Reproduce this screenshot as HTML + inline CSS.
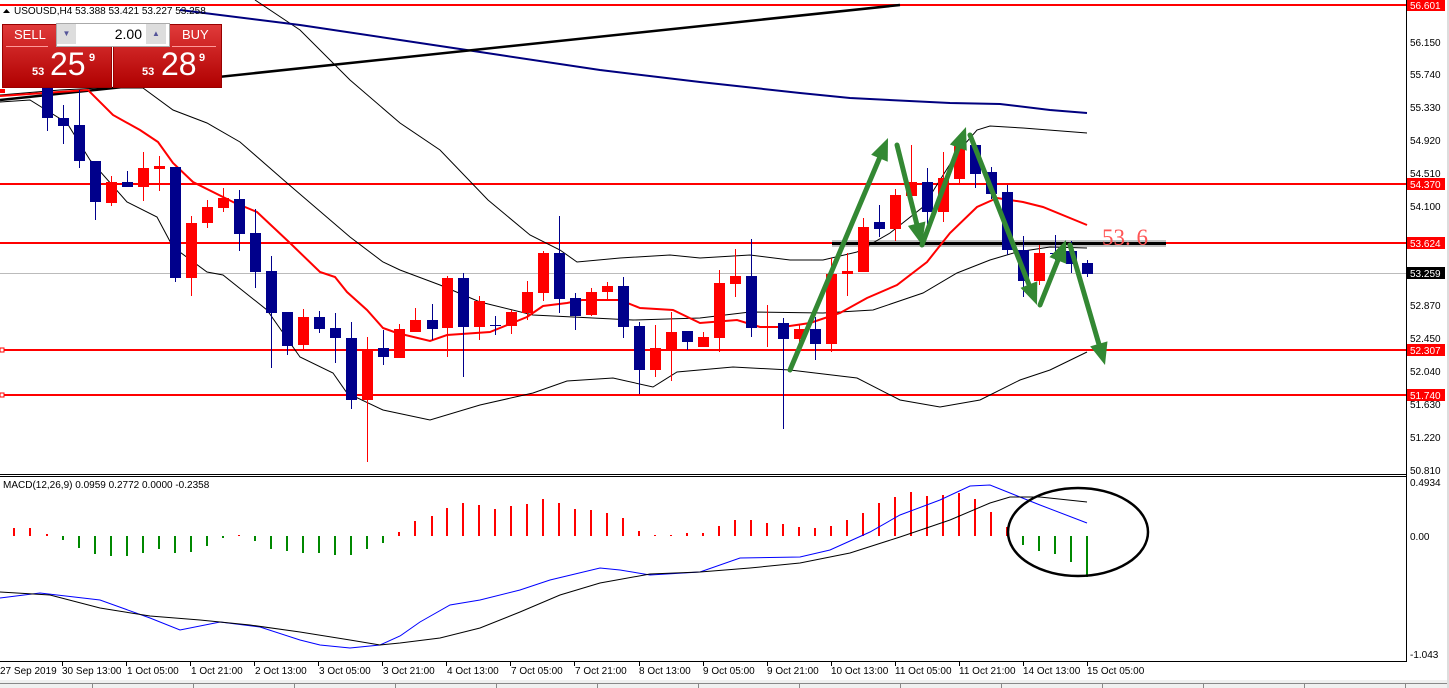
<!DOCTYPE html>
<html><head><meta charset="utf-8"><style>
body{margin:0;width:1449px;height:688px;overflow:hidden;background:#fff;font-family:"Liberation Sans",sans-serif}
svg{position:absolute;left:0;top:0}
.tp{position:absolute;color:#fff;font-family:"Liberation Sans",sans-serif}
</style></head><body>
<svg id="s" width="1449" height="688" xmlns="http://www.w3.org/2000/svg" font-family="Liberation Sans, sans-serif" font-size="10">
<rect width="1449" height="688" fill="#fff"/>
<g id="g"></g>
<g fill="#000">
<text x="1410" y="46">56.150</text><text x="1410" y="78">55.740</text><text x="1410" y="111">55.330</text>
<text x="1410" y="144">54.920</text><text x="1410" y="177">54.510</text><text x="1410" y="210">54.100</text>
<text x="1410" y="309">52.870</text><text x="1410" y="342">52.450</text><text x="1410" y="375">52.040</text>
<text x="1410" y="408">51.630</text><text x="1410" y="441">51.220</text><text x="1410" y="474">50.810</text>
<text x="1410" y="486">0.4934</text><text x="1410" y="540">0.00</text><text x="1410" y="658">-1.043</text>
<text x="14" y="14">USOUSD,H4  53.388 53.421 53.227 53.258</text>
<text x="3" y="488">MACD(12,26,9) 0.0959 0.2772 0.0000 -0.2358</text>
</g>
<path d="M3 13 L10 13 L6.5 9Z" fill="#000"/>
<g fill="#f00"><rect x="1407" y="-1" width="38" height="12"/><rect x="1407" y="178" width="38" height="12"/><rect x="1407" y="237" width="38" height="12"/><rect x="1407" y="344" width="38" height="12"/><rect x="1407" y="389" width="38" height="12"/></g>
<rect x="1407" y="267" width="38" height="12" fill="#000"/>
<g fill="#fff"><text x="1410" y="9">56.601</text><text x="1410" y="188">54.370</text><text x="1410" y="247">53.624</text><text x="1410" y="354">52.307</text><text x="1410" y="399">51.740</text><text x="1410" y="277">53.259</text></g>
<text x="1102" y="245" font-family="Liberation Serif, serif" font-size="23" fill="#f55">53. 6</text>
<g fill="#000" font-size="10">
<text x="0" y="674">27 Sep 2019</text><text x="62" y="674">30 Sep 13:00</text><text x="127" y="674">1 Oct 05:00</text><text x="191" y="674">1 Oct 21:00</text><text x="255" y="674">2 Oct 13:00</text><text x="319" y="674">3 Oct 05:00</text><text x="383" y="674">3 Oct 21:00</text><text x="447" y="674">4 Oct 13:00</text><text x="511" y="674">7 Oct 05:00</text><text x="575" y="674">7 Oct 21:00</text><text x="639" y="674">8 Oct 13:00</text><text x="703" y="674">9 Oct 05:00</text><text x="767" y="674">9 Oct 21:00</text><text x="831" y="674">10 Oct 13:00</text><text x="895" y="674">11 Oct 05:00</text><text x="959" y="674">11 Oct 21:00</text><text x="1023" y="674">14 Oct 13:00</text><text x="1087" y="674">15 Oct 05:00</text>
</g>
</svg>
<div style="position:absolute;left:2px;top:24px;width:108px;height:62px;background:linear-gradient(#e03a3a,#b00000);border:1px solid #900"></div>
<div style="position:absolute;left:113px;top:24px;width:107px;height:62px;background:linear-gradient(#e03a3a,#b00000);border:1px solid #900"></div>
<div style="position:absolute;left:56px;top:23px;width:112px;height:22px;background:#fff;border:1px solid #aaa"></div>
<div style="position:absolute;left:57px;top:24px;width:19px;height:20px;background:#ddd;color:#559;font-size:8px;text-align:center;line-height:20px">▼</div>
<div style="position:absolute;left:146px;top:24px;width:20px;height:20px;background:#ddd;color:#559;font-size:8px;text-align:center;line-height:20px">▲</div>
<div style="position:absolute;left:80px;top:26px;width:62px;text-align:right;font-size:14px">2.00</div>
<div class="tp" style="left:14px;top:27px;font-size:13px">SELL</div>
<div class="tp" style="left:182px;top:27px;font-size:13px">BUY</div>
<div style="position:absolute;left:6px;top:46px;width:42px;height:1px;background:#f99"></div>
<div style="position:absolute;left:172px;top:46px;width:44px;height:1px;background:#f99"></div>
<div class="tp" style="left:32px;top:66px;font-size:11px;font-weight:bold">53</div>
<div class="tp" style="left:50px;top:46px;font-size:32px">25</div>
<div class="tp" style="left:89px;top:52px;font-size:11px;font-weight:bold">9</div>
<div class="tp" style="left:142px;top:66px;font-size:11px;font-weight:bold">53</div>
<div class="tp" style="left:161px;top:46px;font-size:32px">28</div>
<div class="tp" style="left:199px;top:52px;font-size:11px;font-weight:bold">9</div>
<script>
var g=document.getElementById('g'),h='';
function L(p,c,w,ex){h+='<polyline points="'+p+'" fill="none" stroke="'+c+'" stroke-width="'+w+'" '+(ex||'')+'/>';}
// frame
h+='<rect x="0" y="474" width="1406" height="1" fill="#000"/><rect x="0" y="476" width="1406" height="1" fill="#000"/>';
h+='<rect x="1406" y="0" width="1" height="662" fill="#000"/><rect x="0" y="661" width="1407" height="1" fill="#000"/>';
for(var t=62;t<=1090;t+=64.06)h+='<rect x="'+Math.round(t)+'" y="662" width="1" height="4" fill="#000"/>';
h+='<rect x="0" y="680" width="1449" height="8" fill="#f0f0f0"/><rect x="0" y="683" width="1449" height="1" fill="#888"/>';
for(var t=92;t<1449;t+=101)h+='<rect x="'+t+'" y="683" width="1" height="5" fill="#888"/>';
h+='<rect x="1447" y="0" width="2" height="688" fill="#ddd"/>';
// h lines
[5,184,243,350,395].forEach(function(y){h+='<rect x="0" y="'+(y-1)+'" width="1406" height="2" fill="#f00"/>';});
h+='<rect x="0" y="273" width="1406" height="1" fill="#bbb"/>';
h+='<rect x="0" y="348" width="4" height="4" fill="#fff" stroke="#f00"/><rect x="0" y="393" width="4" height="4" fill="#fff" stroke="#f00"/><rect x="0" y="89" width="5" height="4" fill="#f00"/>';
h+='<rect x="832" y="240" width="334" height="7" fill="#999" opacity=".6"/><rect x="832" y="242" width="334" height="3" fill="#000"/>';
// bands
L('255,0 300,30 350,80 400,123 440,150 488,200 530,235 560,250 577,262 620,258 670,255 700,258 750,255 790,260 823,260 857,252 890,233 923,207 957,153 977,130 990,126 1023,128 1087,133','#000',1);
L('0,95 60,90 100,88 143,88 173,110 207,123 240,142 287,183 350,237 383,262 400,270 440,285 480,302 533,315 633,320 700,318 750,312 823,313 873,310 923,293 957,273 990,260 1017,252 1050,247 1087,248','#000',1);
L('0,102 30,100 67,123 90,160 127,202 157,217 173,247 207,272 223,275 267,310 300,357 333,373 347,393 383,410 430,420 480,405 533,393 567,381 613,378 653,387 677,372 733,367 790,370 857,378 900,400 940,407 980,400 1020,380 1050,370 1087,352','#000',1);
L('180,10 300,25 400,40 500,55 600,70 700,82 800,93 850,98 950,103 1000,104 1050,110 1087,113','#00007f',2);
L('0,100 900,5','#000',2.5);
L('0,96 88,90 113,115 140,130 158,142 173,163 193,182 233,202 257,212 290,243 320,272 335,277 347,292 367,310 383,328 397,333 430,341 447,335 490,332 527,317 543,306 567,303 582,300 620,300 640,308 673,310 700,323 737,320 760,327 783,327 810,323 840,313 867,298 897,285 927,262 950,233 977,207 997,198 1023,202 1043,207 1087,225','#f00',2);
// candles
var C=[[47,88,118,80,131,'b'],[63,118,126,105,144,'b'],[79,125,161,90,168,'b'],[95,161,202,161,220,'b'],[111,182,203,176,206,'r'],[127,182,187,171,187,'b'],[143,168,187,152,201,'r'],[159,166,169,156,191,'r'],[175,167,278,167,282,'b'],[191,223,278,216,296,'r'],[207,207,223,200,228,'r'],[223,198,208,188,212,'r'],[239,199,234,190,251,'b'],[255,233,272,209,288,'b'],[271,271,313,256,368,'b'],[287,312,346,312,355,'b'],[303,317,345,309,351,'r'],[319,317,329,311,333,'b'],[335,328,338,313,363,'b'],[351,338,400,322,409,'b'],[367,349,400,337,462,'r'],[383,348,357,330,365,'b'],[399,329,358,324,358,'r'],[415,320,332,308,332,'r'],[432,320,329,304,340,'b'],[447,278,328,276,357,'r'],[463,278,327,273,377,'b'],[479,301,327,296,340,'r'],[495,325,326,316,335,'b'],[511,312,326,310,334,'r'],[527,292,313,281,320,'r'],[543,253,293,251,301,'r'],[559,253,299,216,313,'b'],[575,298,316,293,330,'b'],[591,292,315,288,316,'r'],[607,286,292,282,300,'r'],[623,286,327,277,338,'b'],[639,326,370,322,394,'b'],[655,348,370,325,377,'r'],[671,332,349,312,381,'r'],[687,331,342,331,350,'b'],[703,337,347,332,347,'r'],[719,283,338,270,352,'r'],[735,276,284,249,297,'r'],[751,276,328,239,337,'b'],[767,326,327,305,347,'r'],[783,323,339,318,429,'b'],[799,329,339,324,344,'r'],[815,329,344,317,360,'b'],[831,274,344,258,352,'r'],[847,271,274,253,296,'r'],[863,227,272,218,272,'r'],[879,222,229,205,237,'b'],[895,195,229,189,241,'r'],[911,182,196,145,196,'r'],[927,182,212,168,224,'b'],[943,178,212,152,222,'r'],[959,142,179,136,183,'r'],[975,145,174,145,188,'b'],[991,172,194,167,199,'b'],[1007,192,250,185,255,'b'],[1023,250,281,236,297,'b'],[1039,253,281,245,285,'r'],[1055,253,254,235,260,'b'],[1071,251,264,241,273,'b'],[1087,263,274,260,277,'b']];
C.forEach(function(c){var col=c[5]=='r'?'#f00':'#00008b';h+='<rect x="'+c[0]+'" y="'+c[3]+'" width="1" height="'+(c[4]-c[3])+'" fill="'+col+'"/><rect x="'+(c[0]-5)+'" y="'+c[1]+'" width="11" height="'+Math.max(1,c[2]-c[1])+'" fill="'+col+'"/>';});
// arrows
function A(x1,y1,x2,y2){var dx=x2-x1,dy=y2-y1,l=Math.sqrt(dx*dx+dy*dy),ux=dx/l,uy=dy/l,bx=x2-ux*22,by=y2-uy*22;
h+='<line x1="'+x1+'" y1="'+y1+'" x2="'+bx+'" y2="'+by+'" stroke="#338833" stroke-width="5" stroke-linecap="round"/>';
h+='<polygon points="'+x2+','+y2+' '+(bx-uy*9)+','+(by+ux*9)+' '+(bx+uy*9)+','+(by-ux*9)+'" fill="#338833"/>';}
A(790,370,888,138);A(897,145,922,245);A(922,245,966,127);A(970,135,1037,305);A(1040,305,1066,240);A(1070,245,1105,365);
// macd hist
var M=[[14,528],[30,528],[47,534],[63,540],[79,548],[95,554],[111,556],[127,556],[143,553],[159,549],[175,553],[191,552],[207,546],[223,538],[239,535],[255,541],[271,549],[287,551],[303,553],[319,553],[335,555],[351,555],[367,549],[383,543],[399,532],[415,521],[432,516],[447,508],[463,503],[479,505],[495,509],[511,506],[527,504],[543,499],[559,503],[575,509],[591,510],[607,513],[623,518],[639,531],[655,535],[671,535],[687,533],[703,533],[719,526],[735,520],[751,520],[767,523],[783,524],[799,527],[815,528],[831,526],[847,520],[863,513],[879,503],[895,497],[911,492],[927,496],[943,495],[959,493],[975,499],[991,512],[1007,527],[1023,545],[1039,551],[1055,554],[1071,562],[1087,577]];
M.forEach(function(m){var up=m[1]<536,y=up?m[1]:536,hh=Math.max(1,Math.abs(m[1]-536));h+='<rect x="'+(m[0]-1)+'" y="'+y+'" width="2" height="'+hh+'" fill="'+(up?'#f00':'#080')+'"/>';});
L('0,598 40,593 100,600 150,618 180,630 220,622 260,627 300,640 320,645 350,648 380,645 400,636 420,622 450,605 480,600 520,590 550,580 600,568 620,570 650,575 700,572 740,558 800,557 830,550 870,532 900,515 940,500 970,486 990,485 1010,493 1040,505 1087,523','#00f',1);
L('0,592 50,595 100,608 150,616 200,620 250,625 300,632 350,640 380,645 400,643 440,638 480,628 520,612 560,595 600,583 650,574 700,572 750,568 800,563 850,553 900,537 950,520 990,503 1010,497 1040,497 1087,502','#000',1);
h+='<ellipse cx="1078" cy="532" rx="70" ry="44" fill="none" stroke="#000" stroke-width="2.5"/>';
g.innerHTML=h;
</script>
</body></html>
